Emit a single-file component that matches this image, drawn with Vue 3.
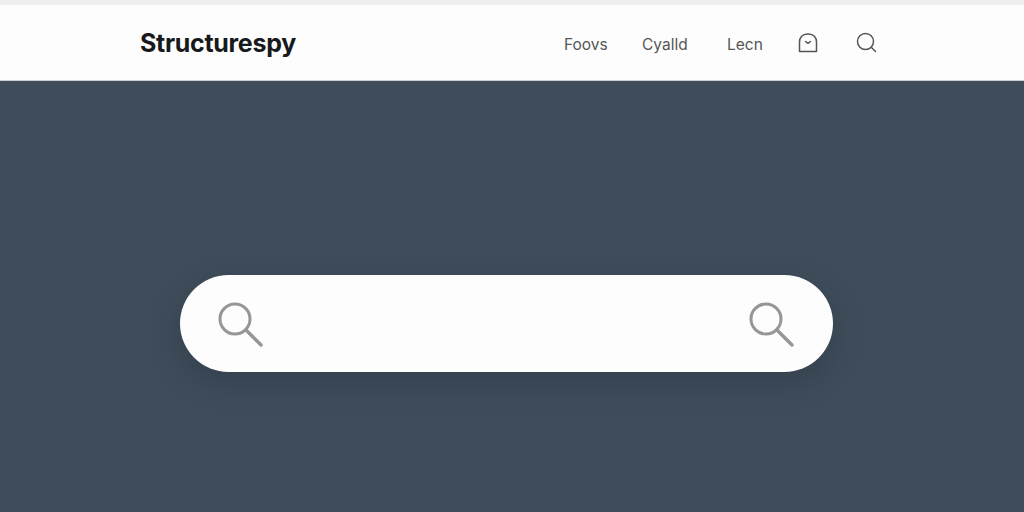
<script setup>
const navLinks = ["Foovs", "Cyalld", "Lecn"];
</script>

<template>
  <div class="page">
    <div class="top-strip"></div>
    <header class="header">
      <div class="logo">Structurespy</div>
      <nav class="nav">
        <a v-for="link in navLinks" :key="link" class="nav-link">{{ link }}</a>
        <svg class="bell" width="22" height="22" viewBox="0 0 22 22" fill="none">
          <path d="M2.500 19.500V10C2.500 5.500 5.500 2 10.500 2h1c5 0 8 3.500 8 8v9.500z" stroke="#555555" stroke-width="1.500" stroke-linejoin="round" />
          <path d="M8.500 9.500l2.500 1.800 2.500-1.800" stroke="#555555" stroke-width="1.500" stroke-linecap="round" stroke-linejoin="round" />
        </svg>
        <svg class="nav-search" width="22" height="22" viewBox="0 0 22 22" fill="none">
          <circle cx="9.500" cy="9.500" r="8" stroke="#555555" stroke-width="1.500" />
          <path d="M15.500 15.500l4 4" stroke="#555555" stroke-width="1.500" stroke-linecap="round" />
        </svg>
      </nav>
    </header>
    <main class="hero">
      <div class="search-bar">
        <svg width="48" height="48" viewBox="0 0 48 48" fill="none">
          <circle cx="18" cy="18" r="15" stroke="#969696" stroke-width="3" />
          <path d="M29 29l15 15" stroke="#969696" stroke-width="3.400" stroke-linecap="round" />
        </svg>
        <svg width="48" height="48" viewBox="0 0 48 48" fill="none">
          <circle cx="18" cy="18" r="15" stroke="#969696" stroke-width="3" />
          <path d="M29 29l15 15" stroke="#969696" stroke-width="3.400" stroke-linecap="round" />
        </svg>
      </div>
    </main>
  </div>
</template>

<style scoped>
.page {
  width: 1024px;
  height: 512px;
  display: flex;
  flex-direction: column;
  overflow: hidden;
  font-family: Inter, "Liberation Sans", sans-serif;
  background: #3f4d5b;
}

.top-strip {
  height: 5px;
  background: #eeeeee;
}

.header {
  height: 76px;
  box-sizing: border-box;
  padding-left: 140px;
  display: flex;
  align-items: center;
  background: #fdfdfd;
  border-bottom: 1px solid #c9ccd0;
}

.logo {
  width: 424px;
  font-size: 25px;
  font-weight: 700;
  letter-spacing: -0.300px;
  color: #17191c;
}

.nav {
  display: flex;
  align-items: center;
}

.nav-link {
  font-size: 15.500px;
  color: #555555;
  margin-top: 4px;
}

.nav-link:nth-child(1) {
  width: 78px;
}

.nav-link:nth-child(2) {
  width: 85px;
}

.nav-link:nth-child(3) {
  width: 70px;
}

.bell {
  margin-right: 37px;
}

.hero {
  flex: 1;
  padding: 194px 0 0 180px;
  box-sizing: border-box;
}

.search-bar {
  width: 653px;
  height: 97px;
  box-sizing: border-box;
  padding: 3px 37px 0 37px;
  display: flex;
  align-items: center;
  justify-content: space-between;
  background: #fdfdfd;
  border-radius: 49px;
  box-shadow: 0 10px 30px rgba(25, 32, 42, 0.3);
}
</style>

<style>
body {
  background: #3f4d5b;
}
</style>
